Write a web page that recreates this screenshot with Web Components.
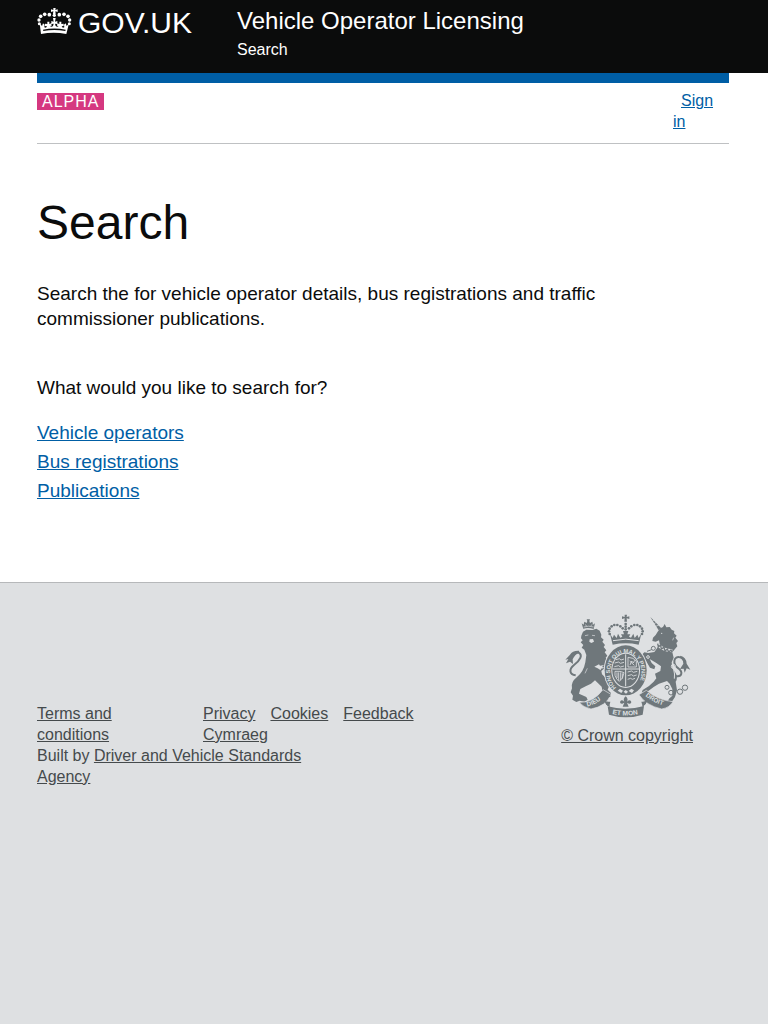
<!DOCTYPE html>
<html lang="en">
<head>
<meta charset="utf-8">
<meta name="viewport" content="width=device-width, initial-scale=1">
<title>Search - Vehicle Operator Licensing - GOV.UK</title>
<style>
  html { background: #dee0e2; }
  body {
    margin: 0; min-height: 100vh; display: flex; flex-direction: column;
    background: #fff; color: #0b0c0c;
    font-family: "Liberation Sans", Arial, Helvetica, sans-serif;
    font-size: 16px; line-height: 21px;
    --gutter: 0 39px 0 37px;
  }
</style>
</head>
<body>
<site-header service="Vehicle Operator Licensing"><span slot="nav">Search</span></site-header>
<phase-banner phase="ALPHA"></phase-banner>
<search-page heading="Search">
  Search the for vehicle operator details, bus registrations and traffic commissioner publications.
</search-page>
<site-footer><royal-arms slot="arms"></royal-arms></site-footer>

<script>
class BaseElement extends HTMLElement {
  render(html) { this.attachShadow({ mode: "open" }).innerHTML = html; }
}

customElements.define("crown-logo", class extends BaseElement {
  connectedCallback() {
    this.render(`
<style>:host{display:block;width:35px;height:27px}svg{display:block;width:100%;height:100%}</style>
<svg viewBox="21 24 105 81" fill="#fff" aria-hidden="true">
  <path d="M70 24h7l-1 6 7-2v8l-7-2 1 8h-8l1-8-7 2v-8l7 2z"/>
  <circle cx="73" cy="46" r="5"/>
  <circle cx="58" cy="44" r="5.5"/><circle cx="88" cy="44" r="5.5"/>
  <circle cx="44" cy="43" r="5.5"/><circle cx="102" cy="43" r="5.5"/>
  <circle cx="32" cy="49" r="5.5"/><circle cx="114" cy="49" r="5.5"/>
  <circle cx="27" cy="60" r="5"/><circle cx="119" cy="60" r="5"/>
  <circle cx="28" cy="71" r="4.5"/><circle cx="118" cy="71" r="4.5"/>
  <path d="M29 70l7 8 3-8 5 4-1 8q6 3 8-3l-6-1v-7l7 1v-7h6v7l6-2 1 7-5 1q4 5 9 0l2-7-7 1v-9l7 2-2-11h8l-2 11 7-2v9l-7-1 2 7q5 5 9 0l-5-1 1-7 6 2v-7h6v7l7-1v7l-6 1q2 6 8 3l-1-8 5-4 3 8 7-8-8 32q-38-7-76 0z"/>
  <path d="M39 89q34-7 68 0l-1 4q-33-6-66 0z" fill="#0b0c0c"/>
</svg>`);
  }
});

customElements.define("site-header", class extends BaseElement {
  connectedCallback() {
    this.render(`
<style>
:host{display:block;background:#0b0c0c;color:#fff}
header{display:grid;grid-template-columns:200px 1fr;padding:var(--gutter)}
.logo{display:flex;gap:6px;align-self:start;justify-self:start;margin-top:8px;color:#fff;text-decoration:none;font-size:30px;line-height:30px}
.service{padding:6px 0 13px}
.name{display:block;color:#fff;text-decoration:none;font-size:24px;line-height:30px}
nav{margin-top:4px;line-height:20px}
</style>
<header>
  <a class="logo" href="#"><crown-logo></crown-logo><span>GOV.UK</span></a>
  <div class="service"><a class="name" href="#">${this.getAttribute("service")}</a><nav><slot name="nav"></slot></nav></div>
</header>`);
  }
});

customElements.define("phase-banner", class extends BaseElement {
  connectedCallback() {
    this.render(`
<style>
:host{display:block;padding:var(--gutter)}
.bar{height:10px;background:#005ea5}
.row{display:flex;justify-content:space-between;align-items:flex-start;padding:7px 0 11px;border-bottom:1px solid #bfc1c3}
strong{margin-top:3px;padding:0 5px;background:#d53880;color:#fff;font-weight:400;line-height:17px;letter-spacing:1px}
.account{width:56px}
a{padding-left:8px;color:#005ea5}
</style>
<div class="bar"></div>
<div class="row"><strong>${this.getAttribute("phase")}</strong><div class="account"><a href="#">Sign<br>in</a></div></div>`);
  }
});

customElements.define("search-page", class extends BaseElement {
  connectedCallback() {
    this.render(`
<style>
:host{display:block;padding:var(--gutter);font-size:19px;line-height:25px}
main{padding:54px 0 79px}
h1{margin:0;font-size:48px;font-weight:400;line-height:50px}
p{margin:33px 0 44px;max-width:600px}
h2{margin:0 0 20px;font-size:19px;font-weight:400;line-height:25px}
ul{display:grid;gap:4px;margin:0;padding:0;list-style:none}
a{color:#005ea5}
</style>
<main>
  <h1>${this.getAttribute("heading")}</h1>
  <p><slot></slot></p>
  <h2>What would you like to search for?</h2>
  <ul><li><a href="#">Vehicle operators</a></li><li><a href="#">Bus registrations</a></li><li><a href="#">Publications</a></li></ul>
</main>`);
  }
});

customElements.define("royal-arms", class extends BaseElement {
  connectedCallback() {
    const beads = [[164,87],[162,79],[164,71],[170,64],[178,60],[187,60],[196,64],[203,70],[261,87],[263,79],[261,71],[255,64],[247,60],[238,60],[229,64],[222,70],[212,57],[212,65],[212,73]]
      .map(([x, y]) => `<circle cx="${x}" cy="${y}" r="4"/>`).join("");
    this.render(`
<style>
:host{display:block;width:125px;height:102px}
svg{display:block;width:100%;height:100%;overflow:visible}
text{font-family:"Liberation Sans",sans-serif;font-weight:700}
</style>
<svg viewBox="30 30 375 306" fill="#6f777b" role="img" aria-label="Royal coat of arms">
  <defs>
    <path id="garter" d="M184 248A47 58 0 1 1 241 248"/>
    <path id="dieu" d="M97 304Q127 298 150 272"/>
    <path id="mon" d="M172 327Q212 336 256 326"/>
    <path id="droit" d="M271 273Q296 294 332 303"/>
  </defs>
  <!-- crown -->
  <path d="M209 29h7l-1 7 8-2v8l-8-2 1 10h-8l1-10-8 2v-8l8 2z"/>
  ${beads}
  <path d="M165 86l8 13 4-10 8 10 4-13 7 12 6-3-4-7h9l-3-10h16l-3 10h9l-4 7 6 3 7-12 4 13 8-10 4 10 8-13-8 33q-39-8-78 0z"/>
  <path d="M174 107q38-9 77 0" fill="none" stroke="#dee0e2" stroke-width="3"/>
  <!-- lion -->
  <path d="M85 72l-5-17 6 4 2-9 7 4 2-6-2-5h10l-2 5 2 6 7-4 2 9 6-4-4 17q-16-5-31-1z"/>
  <path d="M86 66q15-5 30 0M90 59l5 3M107 62l5-3" fill="none" stroke="#dee0e2" stroke-width="2"/>
  <path d="M79 92L84 80 94 74 112 75 124 71 134 77 139 89 138 97 146 104 142 110 150 120 146 126 154 136 149 142 157 152 152 158 159 168 157 174 176 186 180 196 170 202 152 196 146 192 139 198 141 208Q158 222 162 244L158 254 168 264 166 274 150 275 136 267 142 256 140 245 120 226 108 236Q90 244 76 252L72 266 94 276 98 284 88 290 74 287 64 291 52 284 54 272 47 262 51 250Q46 232 66 216 86 200 91 172L94 150 88 134 80 128 85 120 77 112 83 106 78 100Z"/>
  <path d="M118 185l14-7 3 4 12-2-6 6 8 2-11 3-1 5-9-6z" fill="#dee0e2"/>
  <path d="M90 92l10-2M111 91l9 1M97 190l-7 15" fill="none" stroke="#dee0e2" stroke-width="2"/>
  <path d="M104 103l10-1 3 8-8 4-6-4z" fill="#dee0e2"/>
  <path d="M62 211C42 208 42 192 57 180C76 166 84 150 71 143Q58 141 48 156" fill="none" stroke="#6f777b" stroke-width="6"/>
  <path d="M72 137Q52 136 45 149L31 164l9-2-7 13 12-5 9 7-1-14q6-15 20-20z"/>
  <!-- unicorn -->
  <path d="M286 36l25 40 8-6z"/>
  <path d="M292 48l6-3M297 56l8-4M302 64l10-4" stroke="#dee0e2" stroke-width="2"/>
  <path d="M308 80L316 70 324 66 329 57 334 67 344 66 350 74 358 78 357 85 365 92 361 98 369 108 364 114 367 124 360 132 352 142 356 158 350 172 352 190 362 204Q370 218 362 230L366 256 360 276 352 288 338 290 342 281 352 272V252L344 236 336 228 312 236 296 246 276 261 260 263 263 255 282 243 296 230 304 220 300 206 316 198 318 184 304 174 284 162 290 174 301 184 298 193 285 188 272 166 263 160 260 150 268 142 280 144 298 141 306 130 314 116 312 106 302 110 292 108 294 98 302 90Z"/>
  <circle cx="320" cy="85" r="2" fill="#dee0e2"/>
  <path d="M308 119q18 18 44 18" fill="none" stroke="#dee0e2" stroke-width="9"/>
  <path d="M308 116l2 9 7-4 2 11 8-5 3 11 7-6 4 9 7-6 3 6" fill="none" stroke="#6f777b" stroke-width="4"/>
  <path d="M356 98l-3 8" fill="none" stroke="#dee0e2" stroke-width="2"/>
  <path d="M362 213C382 217 384 201 370 190C351 176 356 151 376 157Q387 161 390 176" fill="none" stroke="#6f777b" stroke-width="6"/>
  <path d="M376 152q18 4 19 24l11 18-11-4-6 13-3-12-11 1 10-16q0-13-10-19z"/>
  <g fill="none" stroke="#6f777b" stroke-width="3">
    <circle cx="336" cy="247" r="6"/><circle cx="348" cy="263" r="7"/><circle cx="375" cy="260" r="8"/><circle cx="390" cy="248" r="8"/><circle cx="295" cy="130" r="6"/><path d="M276 139l14-5"/>
  </g>
  <g fill="none" stroke="#dee0e2" stroke-width="3"><circle cx="355" cy="184" r="6"/><path d="M356 193q4 14 2 28"/><circle cx="279" cy="156" r="4"/></g>
  <!-- garter and quartered shield -->
  <ellipse cx="212" cy="196" rx="66" ry="78" fill="#dee0e2"/>
  <ellipse cx="212" cy="196" rx="63" ry="75"/>
  <ellipse cx="212" cy="196" rx="43" ry="53" fill="#dee0e2"/>
  <text font-size="17" fill="#dee0e2"><textPath href="#garter">HONI SOIT QUI MAL Y PENSE</textPath></text>
  <ellipse cx="212" cy="196" rx="40" ry="50"/>
  <path d="M212 148v96M173 192h79" stroke="#dee0e2" stroke-width="3"/>
  <g fill="none" stroke="#dee0e2" stroke-width="2.5">
    <path d="M183 164l10-3 5 4 9-3M179 174l12-3 5 4 11-3M178 185l13-3 5 4 11-3"/>
    <path d="M219 157q17 0 25 12v17h-25zM225 180l5-12 5 6 4-8M224 168l14 13"/>
    <path d="M180 199v12q5 15 13 18 12-8 14-26l-12-4zM186 202v17M191 202v23M197 202v24M202 205v16"/>
    <path d="M218 201l12-3 5 4 12-3M218 212l12-3 5 4 10-3M218 223l9-3 5 3 8-3"/>
  </g>
  <path d="M188 257l7-6 9 6-5 7zM206 260l6-5 7 5-6 6zM221 258l8-7 8 5-6 8z" fill="#dee0e2"/>
  <!-- motto scroll -->
  <path d="M72 292q42 2 72-38l24 14q-14 36-60 44-23-5-36-20zM354 290q-46-4-80-34l-22 13q20 32 68 43 24-4 34-22z" stroke="#dee0e2" stroke-width="2"/>
  <path d="M166 274q-19 3-15 17 4 12 14 13M257 271q22 3 18 17-3 11-13 15" fill="none" stroke="#6f777b" stroke-width="3"/>
  <path d="M150 285q-1 6 16 5l-3 14q-12-2-13-19zM275 283q-2 8-16 7l4 14q12-4 12-21z"/>
  <path d="M158 304q54 15 109-1l-4 26q-50 16-101 0z"/>
  <g fill="#dee0e2" font-size="19">
    <text><textPath href="#dieu">DIEU</textPath></text>
    <text font-size="20"><textPath href="#mon">ET MON</textPath></text>
    <text><textPath href="#droit">DROIT</textPath></text>
  </g>
  <path d="M212 274q-9 8-4 16-10-9-13 1 0 6 7 5l6-3-5 12h18l-5-12 6 3q7 1 7-5-3-10-13-1 5-8-4-16z"/>
</svg>`);
  }
});

customElements.define("site-footer", class extends BaseElement {
  connectedCallback() {
    this.render(`
<style>
:host{display:block;flex:1;background:#dee0e2;border-top:1px solid #b6b8ba;color:#454a4c}
footer{display:flex;justify-content:space-between;align-items:flex-start;padding:var(--gutter)}
a{color:#454a4c}
.meta{width:392px;padding:120px 0 60px}
ul{display:flow-root;margin:0;padding:0;list-style:none}
li{float:left;margin-right:15px}
li:first-child{width:80px;margin-right:86px}
p{margin:0;max-width:300px}
.copyright{display:flex;flex-direction:column;align-items:center;gap:8px;padding:32px 36px 0 0}
</style>
<footer>
  <div class="meta">
    <ul><li><a href="#">Terms and conditions</a></li><li><a href="#">Privacy</a></li><li><a href="#">Cookies</a></li><li><a href="#">Feedback</a></li><li><a href="#">Cymraeg</a></li></ul>
    <p>Built by <a href="#">Driver and Vehicle Standards Agency</a></p>
  </div>
  <div class="copyright"><slot name="arms"></slot><a href="#">© Crown copyright</a></div>
</footer>`);
  }
});
</script>
</body>
</html>
